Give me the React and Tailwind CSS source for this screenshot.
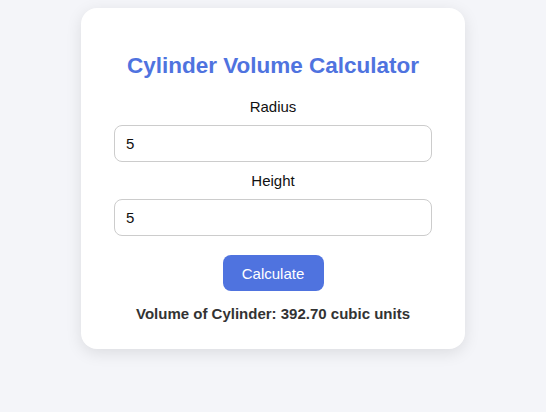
export default function App() {
  return (
    <div className="min-h-[412px] w-full bg-[#f4f5f9] pt-[8px] flex justify-center" style={{ fontFamily: '"Liberation Sans", Arial, sans-serif' }}>
      <div className="w-[384px] h-[341px] bg-white rounded-[16px] shadow-[0_4px_16px_rgba(0,0,0,0.1)] pt-[44px] flex flex-col items-center">
        <h2 className="text-[22.5px] leading-[28px] h-[28px] font-bold text-[#4f73df]">Cylinder Volume Calculator</h2>
        <label className="mt-[18px] text-[15px] leading-[18px] h-[18px] text-[#111]">Radius</label>
        <input
          className="mt-[9px] w-[318px] h-[37px] border border-[#ccc] rounded-[8px] px-[11px] text-[15px] text-[#111] outline-none"
          defaultValue="5"
        />
        <label className="mt-[10px] text-[15px] leading-[18px] h-[18px] text-[#111]">Height</label>
        <input
          className="mt-[9px] w-[318px] h-[37px] border border-[#ccc] rounded-[8px] px-[11px] text-[15px] text-[#111] outline-none"
          defaultValue="5"
        />
        <button className="mt-[19px] h-[36px] w-[101px] rounded-[8px] bg-[#4f73df] text-white text-[15px] leading-[18px] pt-px">Calculate</button>
        <p className="mt-[14px] text-[15px] leading-[18px] h-[18px] font-bold text-[#333]">Volume of Cylinder: 392.70 cubic units</p>
      </div>
    </div>
  );
}
